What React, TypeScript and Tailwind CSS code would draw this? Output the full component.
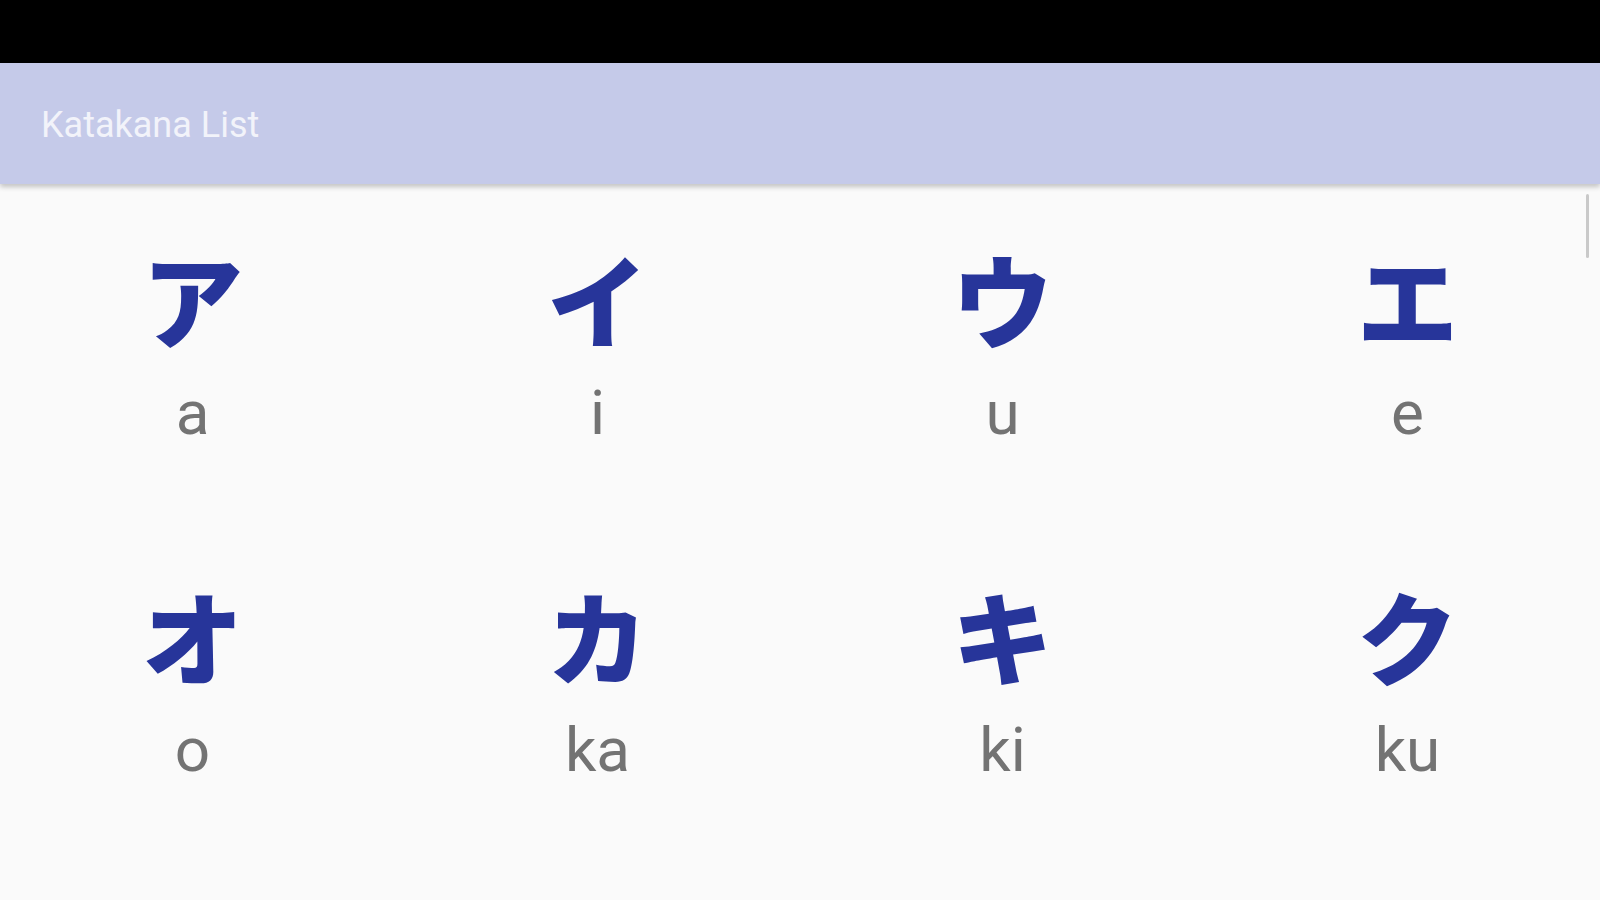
const KANA = [
  { k: 'ア', r: 'a' },
  { k: 'イ', r: 'i' },
  { k: 'ウ', r: 'u' },
  { k: 'エ', r: 'e' },
  { k: 'オ', r: 'o' },
  { k: 'カ', r: 'ka' },
  { k: 'キ', r: 'ki' },
  { k: 'ク', r: 'ku' },
]

export default function App() {
  return (
    <div className="w-[1600px] h-[900px] overflow-hidden flex flex-col bg-[#fafafa] font-['Roboto',sans-serif]">
      {/* status bar */}
      <div className="h-[63px] bg-black shrink-0" />

      {/* toolbar */}
      <div className="relative z-10 h-[121px] shrink-0 bg-[#c5cae9] flex items-center px-[41px] shadow-[0_3px_5px_rgba(0,0,0,0.22)]">
        <span className="text-[36px] text-[#f2f3fa] pt-[3px]">Katakana List</span>
      </div>

      <div className="relative flex-1">
        <div className="grid grid-cols-4 gap-x-[44px] gap-y-[140px] px-[12px] pt-[63px]">
          {KANA.map((item) => (
            <div key={item.r} className="flex flex-col items-center">
              <div className="text-[101px] leading-[100px] h-[100px] font-black text-[#27359a] font-['Noto_Sans_CJK_JP',sans-serif]">
                {item.k}
              </div>
              <div className="mt-[35px] text-[62px] leading-[62px] text-[#737373]">{item.r}</div>
            </div>
          ))}
        </div>

        {/* scroll indicator */}
        <div className="absolute right-[11px] top-[10px] w-[3px] h-[64px] bg-[#c9c9c9] rounded-sm" />
      </div>
    </div>
  )
}
